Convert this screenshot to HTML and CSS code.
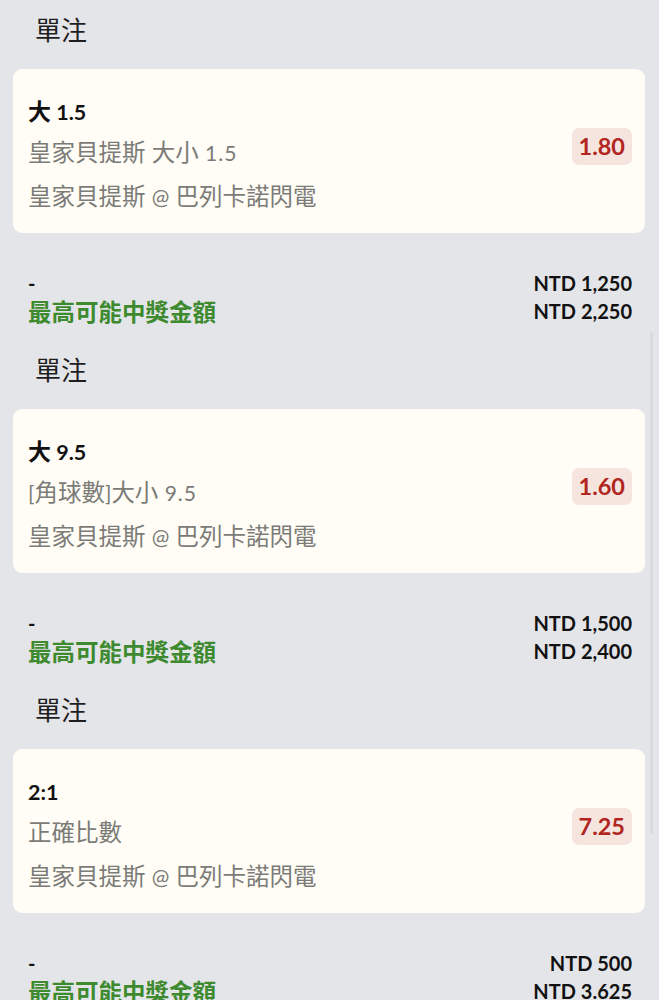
FILE: index.html
```html
<!DOCTYPE html>
<html lang="zh-Hant">
<head>
<meta charset="utf-8">
<title>單注</title>
<link rel="stylesheet" href="styles.css">
</head>
<body>
<div class="list">
  <section class="block">
    <div class="title">單注</div>
    <div class="card">
      <div class="info">
        <div class="sel">大 <span class="lat">1.5</span></div>
        <div class="mkt">皇家貝提斯 大小 <span class="lat num">1.5</span></div>
        <div class="mkt">皇家貝提斯 <span class="lat">@</span> 巴列卡諾閃電</div>
      </div>
      <div class="odds">1.80</div>
    </div>
    <div class="summary">
      <div class="left">
        <div class="dash">-</div>
        <div class="win">最高可能中獎金額</div>
      </div>
      <div class="right">
        <div>NTD 1,250</div>
        <div>NTD 2,250</div>
      </div>
    </div>
  </section>
  <section class="block">
    <div class="title">單注</div>
    <div class="card">
      <div class="info">
        <div class="sel">大 <span class="lat">9.5</span></div>
        <div class="mkt"><span class="lat">[</span>角球數<span class="lat">]</span>大小 <span class="lat num">9.5</span></div>
        <div class="mkt">皇家貝提斯 <span class="lat">@</span> 巴列卡諾閃電</div>
      </div>
      <div class="odds">1.60</div>
    </div>
    <div class="summary">
      <div class="left">
        <div class="dash">-</div>
        <div class="win">最高可能中獎金額</div>
      </div>
      <div class="right">
        <div>NTD 1,500</div>
        <div>NTD 2,400</div>
      </div>
    </div>
  </section>
  <section class="block">
    <div class="title">單注</div>
    <div class="card">
      <div class="info">
        <div class="sel"><span class="lat">2:1</span></div>
        <div class="mkt">正確比數</div>
        <div class="mkt">皇家貝提斯 <span class="lat">@</span> 巴列卡諾閃電</div>
      </div>
      <div class="odds">7.25</div>
    </div>
    <div class="summary">
      <div class="left">
        <div class="dash">-</div>
        <div class="win">最高可能中獎金額</div>
      </div>
      <div class="right">
        <div>NTD 500</div>
        <div>NTD 3.625</div>
      </div>
    </div>
  </section>
</div>
<div class="scrollbar"></div>
</body>
</html>
```
FILE: styles.css
```css
html, body {
  margin: 0;
  padding: 0;
  background: #e4e5e8;
}
body {
  font-family: "Lato", "Noto Sans CJK TC", sans-serif;
  color: #1a1a1a;
  width: 659px;
  height: 1000px;
  overflow: hidden;
  position: relative;
}
.list {
  display: flex;
  flex-direction: column;
}
.block {
  display: flex;
  flex-direction: column;
  height: 340px;
}
.title {
  height: 58px;
  line-height: 58px;
  margin-bottom: 2px;
  padding-left: 35px;
  font-family: "Noto Sans CJK TC", sans-serif;
  font-size: 26px;
  color: #1e1e1e;
}
.card {
  margin: 9px 14px 0 13px;
  height: 164px;
  box-sizing: border-box;
  padding: 22px 13px 16px 15px;
  background: #fffdf5;
  border-radius: 9px;
  display: flex;
  align-items: center;
  justify-content: space-between;
}
.info {
  align-self: flex-start;
  display: flex;
  flex-direction: column;
}
.sel {
  height: 38px;
  line-height: 38px;
  font-family: "Noto Sans CJK TC", sans-serif;
  font-size: 23px;
  font-weight: 700;
  color: #111;
}
.sel .lat {
  font-family: "Lato", sans-serif;
  font-size: 21.5px;
  font-weight: 700;
}
.mkt {
  height: 44px;
  line-height: 44px;
  font-family: "Noto Sans CJK TC", sans-serif;
  font-size: 23.5px;
  word-spacing: 1px;
  color: #7b7b78;
  white-space: nowrap;
}
.mkt .lat {
  font-family: "Lato", sans-serif;
  font-size: 21px;
}
.mkt .num {
  letter-spacing: 1px;
}
.odds {
  margin-bottom: 16px;
  padding: 0 7px;
  height: 37px;
  line-height: 37px;
  border-radius: 7px;
  background: #f6e5de;
  color: #b1261f;
  font-family: "Lato", sans-serif;
  font-size: 23.5px;
  font-weight: 700;
}
.summary {
  margin: 36px 27px 0 28px;
  display: flex;
  justify-content: space-between;
  line-height: 28px;
}
.left, .right {
  display: flex;
  flex-direction: column;
}
.dash {
  height: 28px;
  font-family: "Lato", sans-serif;
  font-size: 20px;
  font-weight: 700;
  color: #111;
}
.win {
  height: 28px;
  font-family: "Noto Sans CJK TC", sans-serif;
  font-size: 23.5px;
  font-weight: 700;
  color: #3e8a2f;
  white-space: nowrap;
}
.right {
  align-items: flex-end;
  font-family: "Lato", sans-serif;
  font-size: 20px;
  font-weight: 700;
  color: #111;
}
.right div {
  height: 28px;
}
.scrollbar {
  position: absolute;
  left: 650px;
  top: 332px;
  width: 3px;
  height: 502px;
  border-radius: 2px;
  background: #d9dadd;
}
```
